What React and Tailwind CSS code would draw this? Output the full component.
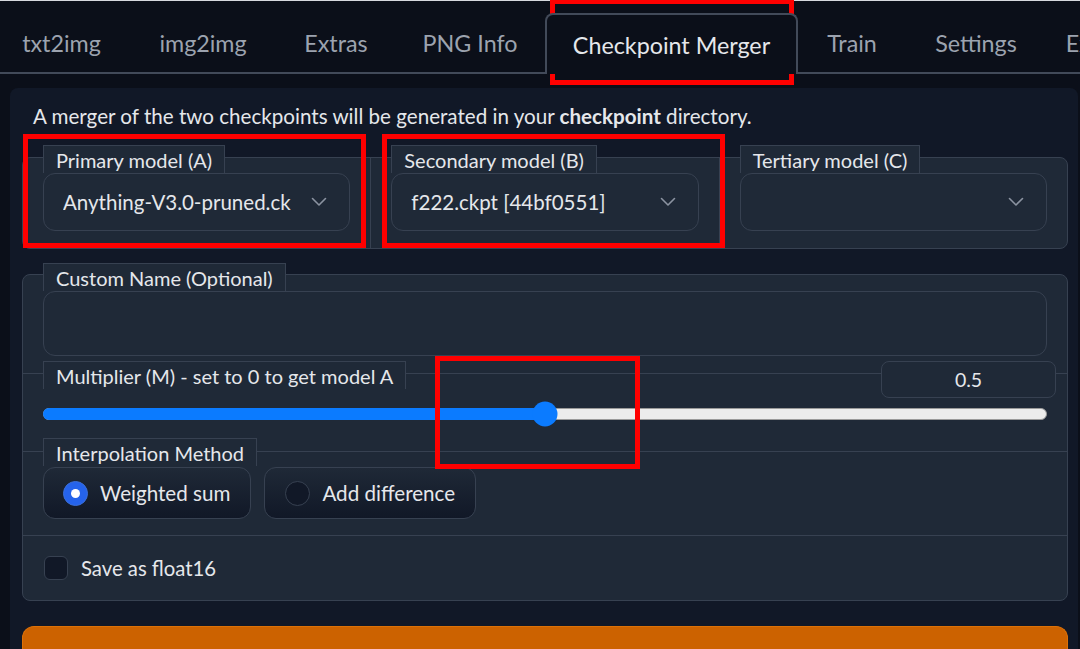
import React from 'react';

function Chevron() {
  return (
    <svg width="16" height="10" viewBox="0 0 16 10" fill="none" className="shrink-0">
      <path d="M1.5 1.5 L8 8 L14.5 1.5" stroke="#8b93a1" strokeWidth="1.6" strokeLinecap="round" strokeLinejoin="round" />
    </svg>
  );
}

function Label({ children, className = '' }) {
  return (
    <span className={'self-start h-[28px] px-[12px] flex items-center border border-b-0 border-[#374151] bg-[#1f2937] text-[20px] text-[#e5e7eb] leading-none whitespace-nowrap ' + className}>
      {children}
    </span>
  );
}

function Dropdown({ value }) {
  return (
    <div className="h-[58px] rounded-xl border border-[#374151] bg-[#1f2937] flex items-center justify-between pl-[19px] pr-[22px]">
      <span className="text-[20.5px] text-[#e5e7eb] whitespace-nowrap overflow-hidden">{value}</span>
      <Chevron />
    </div>
  );
}

const tabs = [
  { name: 'txt2img', w: 'w-[135px]' },
  { name: 'img2img', w: 'w-[148px]' },
  { name: 'Extras', w: 'w-[118px]' },
  { name: 'PNG Info', w: 'w-[150px]' },
  { name: 'Checkpoint Merger', w: 'w-[253px]', active: true },
  { name: 'Train', w: 'w-[108px]' },
  { name: 'Settings', w: 'w-[140px]' },
  { name: 'Extensions', w: 'w-[150px]' },
];

export default function App() {
  return (
    <div className="relative w-[1080px] h-[649px] overflow-hidden bg-[#0b0f19] font-['Lato',sans-serif]">
      <div className="h-px bg-[#d7d9de]" />
      {/* Tabs */}
      <div className="flex h-[73px] -ml-[6px] pt-[12px] border-b-2 border-[#424a59]">
        {tabs.map((t) =>
          t.active ? (
            <div key={t.name} className={t.w + ' shrink-0 -mb-[2px] pt-[2px] relative z-10 flex items-center justify-center rounded-t-lg border-2 border-b-0 border-[#424a59] bg-[#0b0f19] text-[23.3px] text-[#e5e7eb] whitespace-nowrap'}>
              {t.name}
            </div>
          ) : (
            <div key={t.name} className={t.w + ' shrink-0 pt-[2px] flex items-center justify-center text-[23.3px] text-[#9ca3af] whitespace-nowrap'}>
              {t.name}
            </div>
          )
        )}
      </div>

      {/* Panel */}
      <div className="mt-[14px] ml-[10px] mr-[2px] rounded-t-lg bg-[#111827] pl-[12px] pr-[10px] pt-[14px] h-[600px]">
        <p className="h-[28px] ml-[11px] flex items-center text-[20.6px] text-[#e5e7eb] whitespace-nowrap">
          A merger of the two checkpoints will be generated in your&nbsp;<b className="font-bold">checkpoint</b>&nbsp;directory.
        </p>

        {/* Models */}
        <div className="mt-[27px] flex rounded-lg border border-[#374151] bg-[#1f2937]">
          <div className="flex-1 px-[20px] pb-[17px] flex flex-col">
            <Label className="-mt-[13px]">Primary model (A)</Label>
            <Dropdown value="Anything-V3.0-pruned.ck" />
          </div>
          <div className="flex-1 border-l border-[#374151] px-[20px] pb-[17px] flex flex-col">
            <Label className="-mt-[13px]">Secondary model (B)</Label>
            <Dropdown value="f222.ckpt [44bf0551]" />
          </div>
          <div className="flex-1 border-l border-[#374151] px-[20px] pb-[17px] flex flex-col">
            <Label className="-mt-[13px]">Tertiary model (C)</Label>
            <Dropdown value="" />
          </div>
        </div>

        {/* Settings block */}
        <div className="mt-[25px] rounded-lg border border-[#374151] bg-[#1f2937] flex flex-col">
          <div className="px-[20px] pb-[17px] flex flex-col">
            <Label className="-mt-[12px]">Custom Name (Optional)</Label>
            <div className="h-[65px] rounded-xl border border-[#374151] bg-[#1f2937]" />
          </div>

          <div className="border-t border-[#374151] px-[20px] pb-[25px] flex flex-col">
            <div className="-mt-[13px] flex items-start justify-between">
              <Label>Multiplier (M) - set to 0 to get model A</Label>
              <div className="-mr-[9px] w-[175px] h-[37px] rounded-lg border border-[#374151] bg-[#1f2937] flex items-center justify-center text-[19.5px] text-[#e5e7eb]">
                0.5
              </div>
            </div>
            <div className="mt-[3px] h-[25px] flex items-center">
              <div className="relative w-full h-[12px] rounded-full bg-[#ececec] border border-[#9a9a9a]">
                <div className="absolute -left-px -top-px -bottom-px w-1/2 rounded-full bg-[#0b7bff]" />
                <div className="absolute left-1/2 top-1/2 -translate-x-1/2 -translate-y-1/2 w-[25px] h-[25px] rounded-full bg-[#0b7bff]" />
              </div>
            </div>
          </div>

          <div className="border-t border-[#374151] px-[20px] pb-[16px] flex flex-col">
            <Label className="-mt-[14px]">Interpolation Method</Label>
            <div className="mt-[1px] flex gap-[13px]">
              <div className="h-[52px] flex items-center pl-[19px] pr-[20px] rounded-xl border border-[#374151] bg-linear-to-b from-[#1f2937] to-[#111827]">
                <span className="w-[25px] h-[25px] rounded-full bg-[#2563eb] border border-[#3b6fd8] flex items-center justify-center">
                  <span className="w-[9px] h-[9px] rounded-full bg-white" />
                </span>
                <span className="ml-[12px] text-[20.6px] text-[#e5e7eb] whitespace-nowrap">Weighted sum</span>
              </div>
              <div className="h-[52px] flex items-center pl-[20px] pr-[20px] rounded-xl border border-[#374151] bg-linear-to-b from-[#1f2937] to-[#111827]">
                <span className="w-[25px] h-[25px] rounded-full bg-[#111827] border-[1.5px] border-[#374151]" />
                <span className="ml-[12px] text-[20.6px] text-[#e5e7eb] whitespace-nowrap">Add difference</span>
              </div>
            </div>
          </div>

          <div className="border-t border-[#374151] px-[21px] pt-[20px] pb-[20px] flex items-center">
            <span className="w-[24px] h-[24px] rounded-md border border-[#374151] bg-[#111827]" />
            <span className="ml-[13px] text-[20.3px] text-[#e5e7eb] whitespace-nowrap leading-none">Save as float16</span>
          </div>
        </div>

        <div className="mt-[25px] h-[60px] rounded-t-xl bg-[#cc6200] border border-b-0 border-[#dd7107]" />
      </div>

      {/* Red annotation boxes */}
      <div className="absolute left-[550px] top-[-1px] w-[244px] h-[86px] border-[5px] border-[#ff0000]" />
      <div className="absolute left-[23px] top-[134px] w-[343px] h-[114px] border-[5px] border-[#ff0000]" />
      <div className="absolute left-[382px] top-[134px] w-[343px] h-[114px] border-[5px] border-[#ff0000]" />
      <div className="absolute left-[435px] top-[356px] w-[205px] h-[113px] border-[5px] border-[#ff0000]" />
    </div>
  );
}
